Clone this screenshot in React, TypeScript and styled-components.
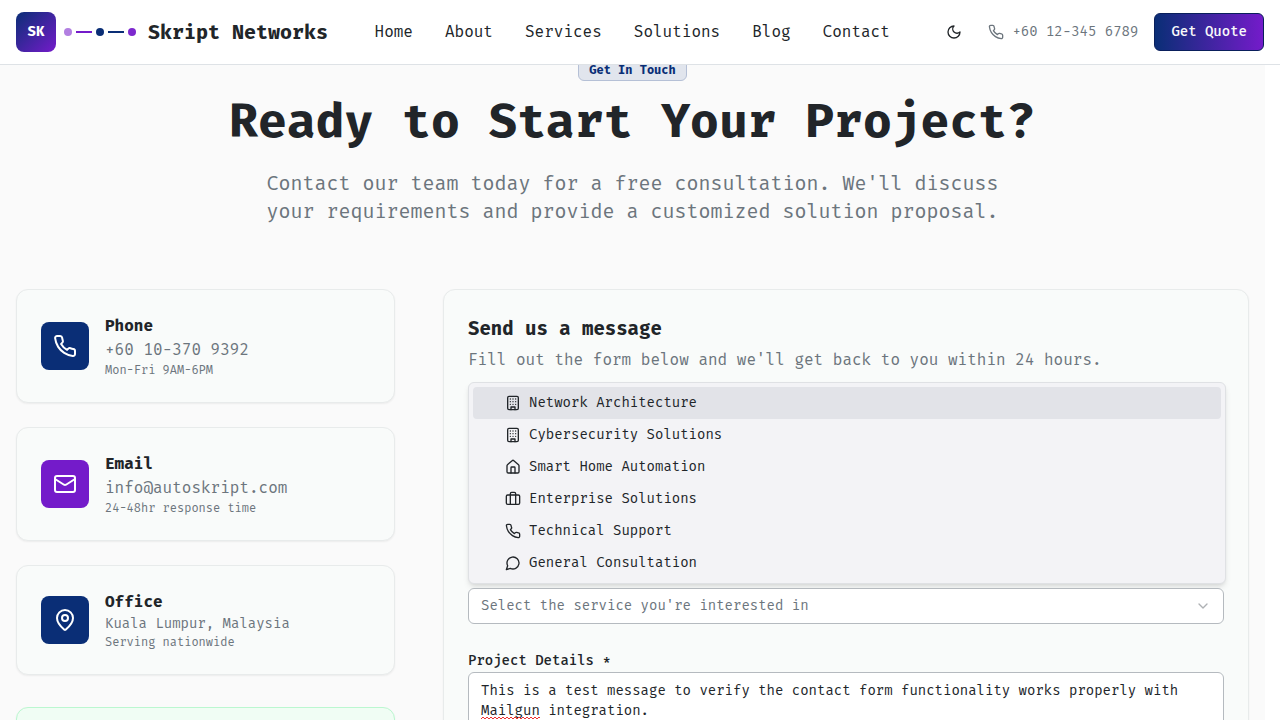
import React, { useState } from "react";
import styled, { createGlobalStyle } from "styled-components";
import { Briefcase, ChevronDown, House, Mail, MapPin } from "lucide-react";

const navy = "#0a2e76";
const purple = "#741bca";
const ink = "#212529";
const muted = "#6c757d";

const GlobalStyle = createGlobalStyle`
  *, *::before, *::after { box-sizing: border-box; }
  body {
    margin: 0;
    background: #ffffff;
    color: ${ink};
    font-family: "Fira Mono", "Liberation Mono", monospace;
    font-size: 16px;
    line-height: 24px;
  }
  h1, h2, h3, p, ul { margin: 0; padding: 0; }
  button, select, textarea { font-family: inherit; }
  a { color: inherit; text-decoration: none; }
`;

const Page = styled.div`
  height: 100vh;
  overflow: hidden;
`;

const Header = styled.header`
  position: fixed;
  inset: 0 0 auto 0;
  z-index: 10;
  display: flex;
  align-items: center;
  justify-content: space-between;
  padding: 12px 16px;
  background: #ffffff;
  border-bottom: 1px solid #dee2e6;
  white-space: nowrap;
`;

const Brand = styled.a`
  display: flex;
  align-items: center;
  gap: 12px;
  font-size: 20px;
  font-weight: 700;
  line-height: 28px;
`;

const BrandMark = styled.span`
  display: flex;
  align-items: center;
  gap: 8px;
`;

const LogoTile = styled.span`
  display: flex;
  align-items: center;
  justify-content: center;
  width: 40px;
  height: 40px;
  border-radius: 8px;
  background: linear-gradient(135deg, ${navy}, ${purple});
  color: #ffffff;
  font-size: 14px;
  line-height: 20px;
`;

const Circuit = styled.span`
  display: flex;
  align-items: center;
  gap: 4px;
`;

const Dot = styled.span<{ $color: string }>`
  width: 8px;
  height: 8px;
  border-radius: 50%;
  background: ${(p) => p.$color};
`;

const Wire = styled.span<{ $color: string }>`
  width: 16px;
  height: 2px;
  background: ${(p) => p.$color};
`;

const Nav = styled.nav`
  display: flex;
  gap: 32px;
`;

const Actions = styled.div`
  display: flex;
  align-items: center;
  gap: 16px;
`;

const IconButton = styled.button`
  display: flex;
  align-items: center;
  justify-content: center;
  width: 36px;
  height: 36px;
  padding: 0;
  border: 0;
  border-radius: 6px;
  background: transparent;
  color: ${ink};
  cursor: pointer;
`;

const PhoneLink = styled.a`
  display: flex;
  align-items: center;
  gap: 8px;
  color: ${muted};
  font-size: 14px;
  line-height: 20px;
`;

const QuoteButton = styled.button`
  padding: 8px 16px;
  border: 1px solid #0a1f5c;
  border-radius: 6px;
  background: linear-gradient(90deg, ${navy}, ${purple});
  color: #f8f9fa;
  font-size: 14px;
  font-weight: 500;
  line-height: 20px;
  cursor: pointer;
`;

const Main = styled.main`
  margin-right: 15px;
  padding: 59px 16px 96px;
  background: #fafafa;
`;

const Intro = styled.section`
  display: flex;
  flex-direction: column;
  align-items: center;
  margin-bottom: 64px;
  text-align: center;
`;

const Badge = styled.span`
  margin-bottom: 16px;
  padding: 2px 10px;
  border: 1px solid #b5c0d6;
  border-radius: 6px;
  background: #e1e5ed;
  color: ${navy};
  font-size: 12px;
  font-weight: 600;
  line-height: 16px;
`;

const Title = styled.h1`
  margin-bottom: 24px;
  font-size: 48px;
  font-weight: 700;
  line-height: 48px;
`;

const Lead = styled.p`
  max-width: 768px;
  color: ${muted};
  font-size: 20px;
  line-height: 28px;
`;

const Columns = styled.div`
  display: grid;
  grid-template-columns: repeat(3, minmax(0, 1fr));
  align-items: start;
  gap: 48px;
`;

const ContactColumn = styled.div`
  display: flex;
  flex-direction: column;
  gap: 32px;
`;

const ContactList = styled.div`
  display: flex;
  flex-direction: column;
  gap: 24px;
`;

const Card = styled.section`
  padding: 24px;
  border: 1px solid #e8ebeb;
  border-radius: 12px;
  background: #f9fbfa;
  box-shadow: 0 1px 2px rgba(0, 0, 0, 0.06);
`;

const ContactCard = styled(Card)`
  display: flex;
  align-items: center;
  gap: 16px;
`;

const IconTile = styled.span<{ $color: string }>`
  display: flex;
  align-items: center;
  justify-content: center;
  flex: none;
  width: 48px;
  height: 48px;
  border-radius: 8px;
  background: ${(p) => p.$color};
  color: #ffffff;
`;

const ContactName = styled.h3`
  font-size: 16px;
  font-weight: 600;
  line-height: 24px;
`;

const ContactValue = styled.p<{ $small?: boolean }>`
  color: ${muted};
  font-size: ${(p) => (p.$small ? 14 : 16)}px;
  line-height: ${(p) => (p.$small ? 20 : 24)}px;
`;

const ContactNote = styled.p`
  color: ${muted};
  font-size: 12px;
  line-height: 16px;
`;

const NoticeCard = styled(Card)`
  min-height: 112px;
  border-color: #bbf7d0;
  background: #f0fdf4;
`;

const FormCard = styled(Card)`
  grid-column: span 2;
`;

const FormTitle = styled.h2`
  margin-bottom: 4px;
  font-size: 19px;
  font-weight: 600;
  line-height: 30px;
`;

const FormHint = styled.p`
  color: ${muted};
`;

const Form = styled.form`
  display: flex;
  flex-direction: column;
  gap: 24px;
  margin-top: 10px;
`;

const Field = styled.div`
  display: flex;
  flex-direction: column;
`;

const Label = styled.label`
  padding-top: 2px;
  font-size: 14px;
  font-weight: 500;
  line-height: 22px;
`;

const Menu = styled.ul`
  width: calc(100% + 2px);
  margin-bottom: 4px;
  padding: 4px;
  border: 1px solid #dfe1e4;
  border-radius: 6px;
  background: #f3f3f6;
  box-shadow: 0 4px 6px -1px rgba(0, 0, 0, 0.1), 0 2px 4px -2px rgba(0, 0, 0, 0.1);
  list-style: none;
`;

const MenuItem = styled.button<{ $active: boolean }>`
  display: flex;
  align-items: center;
  gap: 8px;
  width: 100%;
  padding: 6px 32px;
  border: 0;
  border-radius: 4px;
  background: ${(p) => (p.$active ? "#e2e3e8" : "transparent")};
  color: ${ink};
  font-size: 14px;
  line-height: 20px;
  text-align: left;
  cursor: pointer;
`;

const SelectBox = styled.div`
  display: grid;
  align-items: center;

  & > * {
    grid-area: 1 / 1;
  }

  & > svg {
    justify-self: end;
    margin-right: 13px;
    color: #aeb1b4;
    pointer-events: none;
  }
`;

const Select = styled.select`
  appearance: none;
  width: 100%;
  height: 36px;
  padding: 0 12px;
  border: 1px solid #b5babf;
  border-radius: 6px;
  background: #ffffff;
  color: ${muted};
  font-size: 14px;
  line-height: 20px;
`;

const TextBox = styled.div`
  position: relative;
  display: flex;
`;

const TextArea = styled.textarea`
  width: 100%;
  min-height: 120px;
  padding: 8px 12px;
  border: 1px solid #b5babf;
  border-radius: 6px;
  outline: 0;
  background: #ffffff;
  color: ${ink};
  font-size: 14px;
  line-height: 20px;
  resize: none;
`;

const SpellingMark = styled.svg`
  position: absolute;
  top: 44px;
  left: 13px;
  pointer-events: none;
`;

type IconProps = { size: number };

function Glyph({ size, children }: IconProps & { children: React.ReactNode }) {
  return (
    <svg
      width={size}
      height={size}
      viewBox="0 0 24 24"
      fill="none"
      stroke="currentColor"
      strokeWidth="2"
      strokeLinecap="round"
      strokeLinejoin="round"
      aria-hidden="true"
    >
      {children}
    </svg>
  );
}

const MoonIcon = ({ size }: IconProps) => (
  <Glyph size={size}>
    <path d="M12 3a6 6 0 0 0 9 9 9 9 0 1 1-9-9Z" />
  </Glyph>
);

const PhoneIcon = ({ size }: IconProps) => (
  <Glyph size={size}>
    <path d="M22 16.92v3a2 2 0 0 1-2.18 2 19.79 19.79 0 0 1-8.63-3.07 19.5 19.5 0 0 1-6-6 19.79 19.79 0 0 1-3.07-8.67A2 2 0 0 1 4.11 2h3a2 2 0 0 1 2 1.72 12.84 12.84 0 0 0 .7 2.81 2 2 0 0 1-.45 2.11L8.09 9.91a16 16 0 0 0 6 6l1.27-1.27a2 2 0 0 1 2.11-.45 12.84 12.84 0 0 0 2.81.7A2 2 0 0 1 22 16.92z" />
  </Glyph>
);

const ChatIcon = ({ size }: IconProps) => (
  <Glyph size={size}>
    <path d="M7.9 20A9 9 0 1 0 4 16.1L2 22Z" />
  </Glyph>
);

const BuildingIcon = ({ size }: IconProps) => (
  <Glyph size={size}>
    <rect x="4" y="2" width="16" height="20" rx="2" />
    <path d="M9 22v-4h6v4" />
    <path d="M8 6h.01M16 6h.01M12 6h.01M12 10h.01M12 14h.01M16 10h.01M16 14h.01M8 10h.01M8 14h.01" />
  </Glyph>
);

const links = ["Home", "About", "Services", "Solutions", "Blog", "Contact"];

const contacts = [
  { name: "Phone", value: "+60 10-370 9392", note: "Mon-Fri 9AM-6PM", icon: PhoneIcon, color: navy },
  { name: "Email", value: "info@autoskript.com", note: "24-48hr response time", icon: Mail, color: purple },
  { name: "Office", value: "Kuala Lumpur, Malaysia", note: "Serving nationwide", icon: MapPin, color: navy, small: true },
];

const services = [
  { name: "Network Architecture", icon: BuildingIcon },
  { name: "Cybersecurity Solutions", icon: BuildingIcon },
  { name: "Smart Home Automation", icon: House },
  { name: "Enterprise Solutions", icon: Briefcase },
  { name: "Technical Support", icon: PhoneIcon },
  { name: "General Consultation", icon: ChatIcon },
];

function SiteHeader() {
  return (
    <Header>
      <Brand href="#home">
        <BrandMark>
          <LogoTile>SK</LogoTile>
          <Circuit aria-hidden="true">
            <Dot $color="#b27fe1" />
            <Wire $color={purple} />
            <Dot $color={navy} />
            <Wire $color={navy} />
            <Dot $color="#7d29ce" />
          </Circuit>
        </BrandMark>
        Skript Networks
      </Brand>
      <Nav>
        {links.map((link) => (
          <a key={link} href={`#${link.toLowerCase()}`}>
            {link}
          </a>
        ))}
      </Nav>
      <Actions>
        <IconButton type="button" aria-label="Toggle theme">
          <MoonIcon size={16} />
        </IconButton>
        <PhoneLink href="tel:+60123456789">
          <PhoneIcon size={16} />
          +60 12-345 6789
        </PhoneLink>
        <QuoteButton type="button">Get Quote</QuoteButton>
      </Actions>
    </Header>
  );
}

function ServicePicker() {
  const [open, setOpen] = useState(true);
  const [active, setActive] = useState(0);
  const [service, setService] = useState("");

  const choose = (name: string) => {
    setService(name);
    setOpen(false);
  };

  return (
    <Field>
      {open && (
        <Menu>
          {services.map(({ name, icon: Icon }, index) => (
            <li key={name}>
              <MenuItem
                type="button"
                $active={index === active}
                onMouseEnter={() => setActive(index)}
                onClick={() => choose(name)}
              >
                <Icon size={16} />
                {name}
              </MenuItem>
            </li>
          ))}
        </Menu>
      )}
      <SelectBox>
        <Select
          aria-label="Service"
          value={service}
          onChange={(event) => choose(event.target.value)}
          onMouseDown={(event) => {
            event.preventDefault();
            setOpen(!open);
          }}
        >
          <option value="">Select the service you're interested in</option>
          {services.map(({ name }) => (
            <option key={name} value={name}>
              {name}
            </option>
          ))}
        </Select>
        <ChevronDown size={16} />
      </SelectBox>
    </Field>
  );
}

export default function App() {
  return (
    <Page>
      <GlobalStyle />
      <SiteHeader />
      <Main>
        <Intro>
          <Badge>Get In Touch</Badge>
          <Title>Ready to Start Your Project?</Title>
          <Lead>
            Contact our team today for a free consultation. We'll discuss your
            requirements and provide a customized solution proposal.
          </Lead>
        </Intro>
        <Columns>
          <ContactColumn>
            <ContactList>
              {contacts.map(({ name, value, note, icon: Icon, color, small }) => (
                <ContactCard key={name}>
                  <IconTile $color={color}>
                    <Icon size={24} />
                  </IconTile>
                  <div>
                    <ContactName>{name}</ContactName>
                    <ContactValue $small={small}>{value}</ContactValue>
                    <ContactNote>{note}</ContactNote>
                  </div>
                </ContactCard>
              ))}
            </ContactList>
            <NoticeCard />
          </ContactColumn>
          <FormCard>
            <FormTitle>Send us a message</FormTitle>
            <FormHint>
              Fill out the form below and we'll get back to you within 24 hours.
            </FormHint>
            <Form>
              <ServicePicker />
              <Field>
                <Label htmlFor="details">Project Details *</Label>
                <TextBox>
                  <TextArea
                    id="details"
                    spellCheck={false}
                    defaultValue="This is a test message to verify the contact form functionality works properly with Mailgun integration."
                  />
                  <SpellingMark width="59" height="4" viewBox="0 0 59 4" aria-hidden="true">
                    <defs>
                      <pattern id="wave" width="4" height="4" patternUnits="userSpaceOnUse">
                        <path d="M-1 2 L0 3 L2 1 L4 3 L5 2" fill="none" stroke="#ee3030" />
                      </pattern>
                    </defs>
                    <rect width="59" height="4" fill="url(#wave)" />
                  </SpellingMark>
                </TextBox>
              </Field>
            </Form>
          </FormCard>
        </Columns>
      </Main>
    </Page>
  );
}
